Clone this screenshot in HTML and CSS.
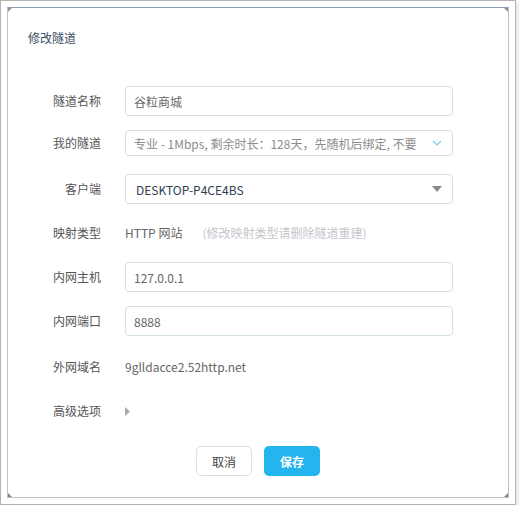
FILE: index.html
```html
<!DOCTYPE html>
<html lang="zh">
<head>
<meta charset="utf-8">
<title>修改隧道</title>
<link rel="stylesheet" href="styles.css">
</head>
<body>
<div class="frame">
  <div class="dialog">
    <span class="corner corner-tl"></span>
    <span class="corner corner-tr"></span>
    <span class="corner corner-bl"></span>
    <span class="corner corner-br"></span>
    <div class="title">修改隧道</div>
    <div class="form">
      <div class="row">
        <div class="label">隧道名称</div>
        <div class="control input">谷粒商城</div>
      </div>
      <div class="row row-small">
        <div class="label">我的隧道</div>
        <div class="control input select-small">
          <span class="clip">专业 - 1Mbps, 剩余时长：128天，先随机后绑定, 不要</span>
          <svg class="chev" width="10" height="6" viewBox="0 0 10 6"><path d="M1 1 L5 5 L9 1" fill="none" stroke="#7ccaef" stroke-width="1.2"/></svg>
        </div>
      </div>
      <div class="row">
        <div class="label">客户端</div>
        <div class="control input select">
          <span class="value-dark">DESKTOP-P4CE4BS</span>
          <svg class="caret" width="10" height="6" viewBox="0 0 10 6"><path d="M0 0 L10 0 L5 6 Z" fill="#8a8a8a"/></svg>
        </div>
      </div>
      <div class="row">
        <div class="label">映射类型</div>
        <div class="control text">HTTP 网站<span class="hint">(修改映射类型请删除隧道重建)</span></div>
      </div>
      <div class="row">
        <div class="label">内网主机</div>
        <div class="control input">127.0.0.1</div>
      </div>
      <div class="row">
        <div class="label">内网端口</div>
        <div class="control input">8888</div>
      </div>
      <div class="row row-domain">
        <div class="label">外网域名</div>
        <div class="control text">9glldacce2.52http.net</div>
      </div>
      <div class="row">
        <div class="label">高级选项</div>
        <div class="control text"><svg class="tri" width="5" height="9" viewBox="0 0 5 9"><path d="M0 0 L5 4.5 L0 9 Z" fill="#a9acb2"/></svg></div>
      </div>
    </div>
    <div class="actions">
      <div class="btn btn-cancel">取消</div>
      <div class="btn btn-save">保存</div>
    </div>
  </div>
</div>
</body>
</html>
```
FILE: styles.css
```css
html, body {
  margin: 0;
  padding: 0;
  background: #ffffff;
}
body {
  font-family: "Noto Sans CJK SC", "Noto Sans", sans-serif;
  font-size: 12px;
  color: #555;
}
.frame {
  box-sizing: border-box;
  width: 516px;
  height: 505px;
  border: 1px solid #b3b3b3;
  padding: 6px;
  background: #fff;
  box-shadow: 2px 2px 4px rgba(0, 0, 0, 0.12);
}
.dialog {
  position: relative;
  box-sizing: border-box;
  width: 502px;
  height: 491px;
  border: 1px solid #c2c2c2;
  border-top-color: #8d9fb2;
  background: #fff;
}
.corner {
  position: absolute;
  width: 0;
  height: 0;
}
.corner-tl {
  left: 0; top: 0;
  border-top: 4px solid #8a9cb0;
  border-right: 4px solid transparent;
}
.corner-tr {
  right: 0; top: 0;
  border-top: 4px solid #7f92a8;
  border-left: 4px solid transparent;
}
.corner-bl {
  left: 0; bottom: 0;
  border-bottom: 4px solid #6f86a0;
  border-right: 4px solid transparent;
}
.corner-br {
  right: 0; bottom: 0;
  border-bottom: 4px solid #6f86a0;
  border-left: 4px solid transparent;
}
.title {
  padding: 20px 0 0 20px;
  line-height: 20px;
  height: 20px;
  color: #3b4d63;
  font-size: 12px;
}
.form {
  margin-top: 38px;
  padding-left: 20px;
  display: flex;
  flex-direction: column;
}
.row {
  display: flex;
  align-items: center;
  height: 30px;
  margin-bottom: 14px;
}
.row-small {
  height: 26px;
  margin-bottom: 18px;
}
.row-domain {
  margin-top: 2px;
}
.label {
  width: 73px;
  margin-right: 24px;
  text-align: right;
  color: #555;
  line-height: 20px;
  white-space: nowrap;
}
.control {
  width: 328px;
  box-sizing: border-box;
}
.input {
  height: 30px;
  border: 1px solid #d3dfe6;
  border-radius: 4px;
  padding: 0 8px;
  display: flex;
  align-items: center;
  color: #666;
  white-space: nowrap;
  overflow: hidden;
}
.select-small {
  height: 26px;
  color: #8c8c8c;
  padding-right: 10px;
}
.clip {
  flex: 1;
  white-space: nowrap;
}
.chev {
  margin-left: 8px;
  flex: none;
}
.select {
  justify-content: space-between;
  padding-left: 10px;
  padding-right: 10px;
}
.value-dark {
  color: #2f3e50;
}
.caret {
  flex: none;
}
.text {
  color: #666;
  line-height: 20px;
  display: flex;
  align-items: center;
  white-space: nowrap;
}
.hint {
  margin-left: 20px;
  color: #c4c6cc;
}
.actions {
  display: flex;
  justify-content: center;
  gap: 12px;
  margin-top: 6px;
}
.btn {
  box-sizing: border-box;
  width: 56px;
  height: 30px;
  border-radius: 5px;
  display: flex;
  align-items: center;
  justify-content: center;
  font-size: 12px;
}
.btn-cancel {
  border: 1px solid #dcdfe4;
  color: #444;
  background: #fff;
}
.btn-save {
  background: #24b4ee;
  color: #fff;
  font-weight: bold;
}
```
